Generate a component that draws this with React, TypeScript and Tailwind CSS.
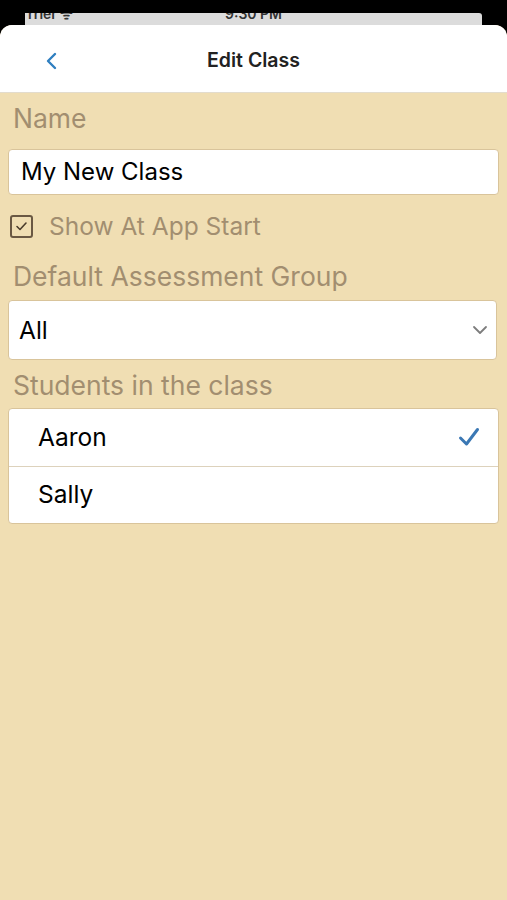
import React from "react";

const font = { fontFamily: "Inter, 'Open Sans', sans-serif" };

function Label({ children }: { children: React.ReactNode }) {
  return <div className="px-[13px] text-[26.5px] leading-none text-[#a28e70]">{children}</div>;
}

export default function App() {
  const students = [
    { name: "Aaron", checked: true },
    { name: "Sally", checked: false },
  ];

  return (
    <div className="min-h-screen h-[900px] bg-black flex flex-col" style={font}>
      {/* status bar from the sheet behind */}
      <div className="h-[25px] pt-[13px] px-[25px] flex-none">
        <div className="h-[12px] w-[457px] bg-[#dcdcdc] rounded-tr-[3px] overflow-hidden relative text-[14px] leading-[16px] font-semibold text-[#333]">
          <span className="absolute left-[3px] -top-[7px]">rrier ᯤ</span>
          <span className="absolute left-[200px] -top-[7px]">9:30 PM</span>
        </div>
      </div>

      {/* sheet */}
      <div className="flex-1 rounded-t-[12px] overflow-hidden bg-[#f0deb3] flex flex-col">
        <div className="h-[68px] bg-white border-b border-[#e3dccd] flex items-center relative flex-none">
          <svg className="absolute left-[45px] top-[27px]" width="13" height="18" viewBox="0 0 13 18">
            <path d="M10 2 L3 9 L10 16" fill="none" stroke="#2f7fc0" strokeWidth="2.4" strokeLinecap="round" strokeLinejoin="round" />
          </svg>
          <div className="w-full text-center text-[19.5px] font-semibold text-[#222] pt-[5px]">Edit Class</div>
        </div>

        <div className="flex flex-col pt-[12px]">
          <Label>Name</Label>
          <div className="mx-[8px] mt-[17px] h-[46px] bg-white rounded-[4px] border border-[#d9c49b] flex items-center px-[12px] text-[24px] text-black">
            My New Class
          </div>

          <div className="mt-[20px] flex items-center px-[10px] h-[24px]">
            <div className="w-[23px] h-[23px] border-2 border-[#6a5843] rounded-[3px] flex items-center justify-center">
              <svg width="13" height="11" viewBox="0 0 13 11">
                <path d="M2 5.5 L5 8.5 L11 2" fill="none" stroke="#4a3c2c" strokeWidth="1.6" strokeLinecap="round" strokeLinejoin="round" />
              </svg>
            </div>
            <span className="ml-[16px] text-[24.5px] text-[#a28e70]">Show At App Start</span>
          </div>

          <div className="mt-[24px]">
            <Label>Default Assessment Group</Label>
          </div>
          <div className="ml-[8px] mr-[10px] mt-[11px] h-[60px] bg-white rounded-[4px] border border-[#d9c49b] flex items-center justify-between pl-[10px] pr-[8px] text-[24.5px] text-black">
            <span>All</span>
            <svg width="16" height="10" viewBox="0 0 16 10">
              <path d="M2 2 L8 8 L14 2" fill="none" stroke="#7d7d7d" strokeWidth="1.8" strokeLinecap="round" strokeLinejoin="round" />
            </svg>
          </div>

          <div className="mt-[12px]">
            <Label>Students in the class</Label>
          </div>
          <div className="mx-[8px] mt-[9px] bg-white rounded-[4px] border border-[#d9c49b] overflow-hidden">
            {students.map((s, i) => (
              <div
                key={s.name}
                className={`h-[57px] flex items-center justify-between pl-[29px] pr-[18px] text-[24.5px] text-black ${i > 0 ? "border-t border-[#ddd2bc]" : ""}`}
              >
                <span>{s.name}</span>
                {s.checked && (
                  <svg width="22" height="20" viewBox="0 0 22 20">
                    <path d="M2.5 11 L8.5 17 L19.5 2.5" fill="none" stroke="#3b78b4" strokeWidth="3" strokeLinecap="round" strokeLinejoin="round" />
                  </svg>
                )}
              </div>
            ))}
          </div>
        </div>
      </div>
    </div>
  );
}
